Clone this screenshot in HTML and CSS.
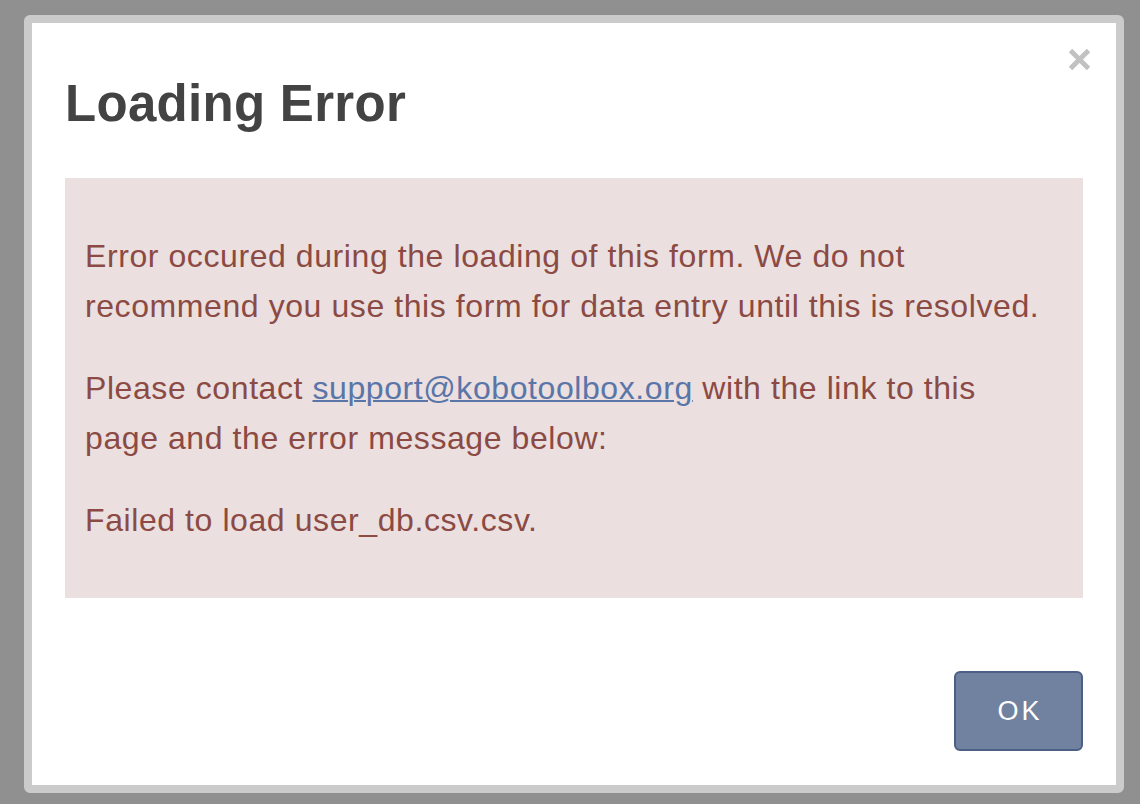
FILE: index.html
```html
<!DOCTYPE html>
<html lang="en">
<head>
<meta charset="utf-8">
<title>Loading Error</title>
<link rel="stylesheet" href="styles.css">
</head>
<body>
  <div class="dialog">
    <button class="close" aria-label="Close">
      <svg viewBox="0 0 23 23" width="23" height="23"><path d="M2.5 2.5 L20.5 20.5 M20.5 2.5 L2.5 20.5" stroke="#c1c1c1" stroke-width="4.8" fill="none"/></svg>
    </button>
    <h3 class="title">Loading Error</h3>
    <div class="alert">
      <p>Error occured during the loading of this form. We do not recommend you use this form for data entry until this is resolved.</p>
      <p>Please contact <a href="#">support@kobotoolbox.org</a> with the link to this page and the error message below:</p>
      <p>Failed to load user_db.csv.csv.</p>
    </div>
    <div class="actions">
      <button class="ok">OK</button>
    </div>
  </div>
</body>
</html>
```
FILE: styles.css
```css
html, body {
  margin: 0;
  height: 100%;
}
body {
  background: #909090;
  padding: 15px 16px 0 24px;
  box-sizing: border-box;
  font-family: "Liberation Sans", Arial, Helvetica, sans-serif;
}
.dialog {
  position: relative;
  width: 1100px;
  height: 778px;
  box-sizing: border-box;
  border: 8px solid #cbcbcb;
  border-radius: 6px;
  background: #fff;
  padding: 50px 33px 34px 33px;
}
.close {
  position: absolute;
  top: 25px;
  right: 25px;
  width: 23px;
  height: 23px;
  padding: 0;
  border: 0;
  background: none;
  display: block;
}
.close svg {
  display: block;
}
.title {
  margin: 0;
  font-size: 51px;
  line-height: 61px;
  font-weight: bold;
  color: #434343;
  letter-spacing: 0.3px;
}
.alert {
  margin-top: 44px;
  background: #ebdfdf;
  color: #8b4a43;
  padding: 21px 30px 21px 20px;
  font-size: 32px;
  line-height: 50px;
  letter-spacing: 0.58px;
}
.alert p {
  margin: 32px 0;
}
.alert a {
  color: #5a75a8;
  text-decoration: underline;
  text-decoration-thickness: 2px;
}
.actions {
  display: flex;
  justify-content: flex-end;
  margin-top: 73px;
}
.ok {
  width: 129px;
  height: 80px;
  box-sizing: border-box;
  background: #7181a0;
  border: 2px solid #4c5f84;
  border-radius: 6px;
  color: #fff;
  font-family: "Liberation Sans", Arial, Helvetica, sans-serif;
  font-size: 27px;
  letter-spacing: 3px;
  padding: 0 0 0 3px;
}
```
